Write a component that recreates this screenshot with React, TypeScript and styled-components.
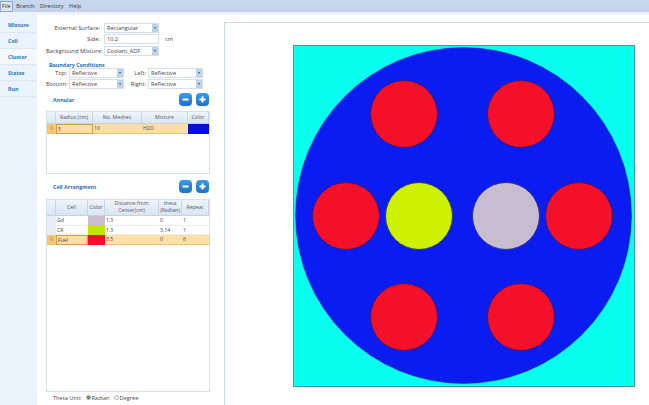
import React from "react";
import styled, { createGlobalStyle } from "styled-components";

const Global = createGlobalStyle`
  html, body { margin: 0; padding: 0; background: #fff; }
  body { font-family: "Open Sans", "Noto Sans", sans-serif; font-size: 6px; color: #444; overflow: hidden; }
`;
const Page = styled.div`
  width: 649px; height: 405px; display: flex; flex-direction: column; overflow: hidden; background: #fff;
`;
const MenuBar = styled.div`
  height: 12px; flex: none; display: flex; align-items: center; gap: 3.5px; padding-left: 1px;
  background: linear-gradient(#c9d8ee, #c3d3ec); border-bottom: 3px solid #eef3fa;
`;
const MenuItem = styled.span<{ $active?: boolean }>`
  font-size: 5.5px; line-height: 9px; padding: 0 1px; color: #333;
  ${(p) => p.$active && "background:#dce8f6; outline: 1px solid #8fa8c8;"}
`;
const Body = styled.div`flex: 1; display: flex; min-height: 0;`;
const Sidebar = styled.nav`
  width: 37px; flex: none; background: #eaf3fb; padding-top: 2px; display: flex; flex-direction: column;
`;
const Tab = styled.div<{ $active?: boolean }>`
  height: 16px; display: flex; align-items: center; padding-left: 8px; box-sizing: border-box;
  font-size: 5.3px; font-weight: 700; color: #2f78b0; border-bottom: 1px solid #dbe7f2;
  background: ${(p) => (p.$active ? "#f4f8fc" : "transparent")};
`;
const Form = styled.section`
  width: 187px; flex: none; box-sizing: border-box; padding: 7px 12px 0 9px; display: flex; flex-direction: column;
`;
const FieldRow = styled.div`
  height: 11.5px; display: grid; grid-template-columns: 54px 55px auto; column-gap: 4px; align-items: center;
`;
const Label = styled.label`text-align: right; white-space: nowrap; font-size: 5.8px; color: #444;`;
const Control = styled.div`
  height: 10px; box-sizing: border-box; border: 1px solid #d5dfe9; background: #fff; display: flex; align-items: center;
  justify-content: space-between; padding-left: 2px; font-size: 5.6px; color: #444; white-space: nowrap; overflow: hidden;
`;
const Arrow = styled.span`
  width: 6px; height: 8px; background: #bcd3ec; display: flex; align-items: center; justify-content: center; flex: none;
  &::after { content: ""; border: 1.5px solid transparent; border-top: 2px solid #33597f; border-bottom: 0; }
`;
const Unit = styled.span`padding-left: 2px; font-size: 5.8px;`;
const Heading = styled.h3<{ $indent?: number }>`
  margin: 0; font-size: 5.3px; font-weight: 700; color: #2a70ad; padding-left: ${(p) => p.$indent ?? 0}px;
`;
const BoundaryHeading = styled(Heading)`margin-top: 4px; height: 7px;`;
const BoundaryGrid = styled.div`
  display: grid; grid-template-columns: 21px 55px 20px 55px; column-gap: 2px; row-gap: 1px; align-items: center;
`;
const SectionHead = styled.div<{ $top: number }>`
  margin-top: ${(p) => p.$top}px; height: 14px; display: flex; align-items: center; justify-content: space-between; padding-left: 7px; padding-right: 3px;
`;
const Buttons = styled.div`display: flex; gap: 4px;`;
const RoundButton = styled.div`
  width: 13px; height: 13px; border-radius: 4px; background: linear-gradient(#3d9be6, #1a72c9);
  color: #fff; display: flex; align-items: center; justify-content: center;
`;
const Table = styled.div<{ $height: number; $top: number; $cols: string }>`
  margin-top: ${(p) => p.$top}px; height: ${(p) => p.$height}px; width: 164px; box-sizing: border-box; border: 1px solid #d6e0e8;
  background: #fff; display: grid; grid-template-columns: ${(p) => p.$cols}; grid-auto-rows: min-content; align-content: start;
`;
const HeadCell = styled.div<{ $h: number }>`
  height: ${(p) => p.$h}px; box-sizing: border-box; background: linear-gradient(#eef4fa, #d8e5f2); border-right: 1px solid #c9d6e2;
  border-bottom: 1px solid #c5d3e0; display: flex; align-items: center; justify-content: center; text-align: center;
  font-size: 5.2px; line-height: 6.6px; color: #556;
`;
const Cell = styled.div<{ $sel?: boolean; $h: number; $focus?: boolean }>`
  height: ${(p) => p.$h}px; box-sizing: border-box; display: flex; align-items: center; padding-left: 1px; font-size: 5.2px; color: #444;
  background: ${(p) => (p.$sel ? "#fddfa6" : "#fff")};
  border-bottom: 1px solid ${(p) => (p.$sel ? "#eebf75" : "#e9eef3")};
  ${(p) => p.$focus && "border: 1px solid #d99a44;"}
`;
const Indicator = styled(Cell)`
  background: ${(p) => (p.$sel ? "#f5c873" : "#e6eef6")}; justify-content: center; padding: 0; color: #a07020; font-size: 4.5px;
`;
const Swatch = styled.div<{ $color: string; $h: number }>`height: ${(p) => p.$h}px; background: ${(p) => p.$color};`;
const UnitRow = styled.div`
  margin-top: 1px; padding-left: 7px; display: flex; align-items: center; font-size: 5.6px; height: 10px; color: #444;
`;
const RadioGroup = styled.span`display: flex; align-items: center; gap: 1px; margin-left: 4px;`;
const Radio = styled.span<{ $on?: boolean }>`
  width: 5px; height: 5px; border-radius: 50%; box-sizing: border-box; border: 1px solid #a9b4a9;
  background: ${(p) => (p.$on ? "#5e9160" : "#fff")};
`;
const CanvasPanel = styled.main`
  flex: 1; margin: 7px 0 0 0; border-top: 1px solid #c9d6e0; border-left: 1px solid #c9d6e0;
  padding: 22px 0 0 68px; background: #fff;
`;
const Drawing = styled.svg`display: block;`;

const Minus = () => (
  <svg width="7" height="7" viewBox="0 0 7 7"><rect x="0.5" y="2.5" width="6" height="2" fill="#fff" /></svg>
);
const Plus = () => (
  <svg width="7" height="7" viewBox="0 0 7 7"><path d="M2.5 .5h2v2h2v2h-2v2h-2v-2h-2v-2h2z" fill="#fff" /></svg>
);
const Sel = ({ children }: { children: string }) => (
  <Control>{children}<Arrow /></Control>
);
const Actions = () => (
  <Buttons><RoundButton><Minus /></RoundButton><RoundButton><Plus /></RoundButton></Buttons>
);

const annularCols = "9px 37px 49px 46px 1fr";
const cellCols = "9px 32px 17px 54px 23px 1fr";
const cellRows = [
  { name: "Gd", color: "#c9bccb", d: "1.3", t: "0", r: "1", h: 10 },
  { name: "CR", color: "#c3e600", d: "1.3", t: "3.14", r: "1", h: 9 },
  { name: "Fuel", color: "#f5102a", d: "3.5", t: "0", r: "6", h: 10, sel: true },
];
const reds: [number, number][] = [[111, 69], [228, 69], [53, 171], [286, 171], [111, 272], [228, 272]];

export default function App() {
  return (
    <Page>
      <Global />
      <MenuBar>
        <MenuItem $active>File</MenuItem>
        <MenuItem>Branch</MenuItem>
        <MenuItem>Directory</MenuItem>
        <MenuItem>Help</MenuItem>
      </MenuBar>
      <Body>
        <Sidebar>
          <Tab>Mixture</Tab>
          <Tab>Cell</Tab>
          <Tab $active>Cluster</Tab>
          <Tab>States</Tab>
          <Tab>Run</Tab>
        </Sidebar>
        <Form>
          <FieldRow><Label>External Surface:</Label><Sel>Rectangular</Sel></FieldRow>
          <FieldRow><Label>Side:</Label><Control>10.2</Control><Unit>cm</Unit></FieldRow>
          <FieldRow><Label>Background Mixture:</Label><Sel>Coolant_ADF</Sel></FieldRow>
          <BoundaryHeading $indent={3}>Boundary Conditions</BoundaryHeading>
          <BoundaryGrid>
            <Label>Top:</Label><Sel>Reflective</Sel><Label>Left:</Label><Sel>Reflective</Sel>
            <Label>Bottom:</Label><Sel>Reflective</Sel><Label>Right:</Label><Sel>Reflective</Sel>
          </BoundaryGrid>
          <SectionHead $top={4}><Heading>Annular</Heading><Actions /></SectionHead>
          <Table $top={4} $height={63} $cols={annularCols}>
            <HeadCell $h={12} />
            <HeadCell $h={12}>Radius (cm)</HeadCell>
            <HeadCell $h={12}>No. Meshes</HeadCell>
            <HeadCell $h={12}>Mixture</HeadCell>
            <HeadCell $h={12}>Color</HeadCell>
            <Indicator $sel $h={10}>0</Indicator>
            <Cell $sel $focus $h={10}>5</Cell>
            <Cell $sel $h={10}>10</Cell>
            <Cell $sel $h={10}>H2O</Cell>
            <Swatch $color="#0a10dc" $h={10} />
          </Table>
          <SectionHead $top={6}><Heading>Cell Arrangment</Heading><Actions /></SectionHead>
          <Table $top={5} $height={193} $cols={cellCols}>
            <HeadCell $h={16} />
            <HeadCell $h={16}>Cell</HeadCell>
            <HeadCell $h={16}>Color</HeadCell>
            <HeadCell $h={16}>Distance from Center(cm)</HeadCell>
            <HeadCell $h={16}>theta (Radian)</HeadCell>
            <HeadCell $h={16}>Repeat</HeadCell>
            {cellRows.map((r) => (
              <React.Fragment key={r.name}>
                <Indicator $sel={r.sel} $h={r.h}>{r.sel ? "0" : ""}</Indicator>
                <Cell $sel={r.sel} $focus={r.sel} $h={r.h}>{r.name}</Cell>
                <Swatch $color={r.color} $h={r.h} />
                <Cell $sel={r.sel} $h={r.h}>{r.d}</Cell>
                <Cell $sel={r.sel} $h={r.h}>{r.t}</Cell>
                <Cell $sel={r.sel} $h={r.h}>{r.r}</Cell>
              </React.Fragment>
            ))}
          </Table>
          <UnitRow>
            Theta Unit:
            <RadioGroup><Radio $on />Radian</RadioGroup>
            <RadioGroup><Radio />Degree</RadioGroup>
          </UnitRow>
        </Form>
        <CanvasPanel>
          <Drawing width="342" height="342" viewBox="0 0 342 342">
            <rect x="0.5" y="0.5" width="341" height="341" fill="#08fff0" stroke="#4a9c98" />
            <circle cx="170.5" cy="170.5" r="168" fill="#0a1cf0" stroke="#1a2a90" strokeWidth="0.5" />
            {reds.map(([x, y]) => (
              <circle key={`${x}-${y}`} cx={x} cy={y} r="33.5" fill="#f5102a" stroke="#40186c" strokeWidth="1" />
            ))}
            <circle cx="126" cy="171" r="33.5" fill="#ccf000" stroke="#2f4060" strokeWidth="1" />
            <circle cx="213" cy="171" r="33.5" fill="#c8bcd0" stroke="#2f2f88" strokeWidth="1" />
          </Drawing>
        </CanvasPanel>
      </Body>
    </Page>
  );
}
